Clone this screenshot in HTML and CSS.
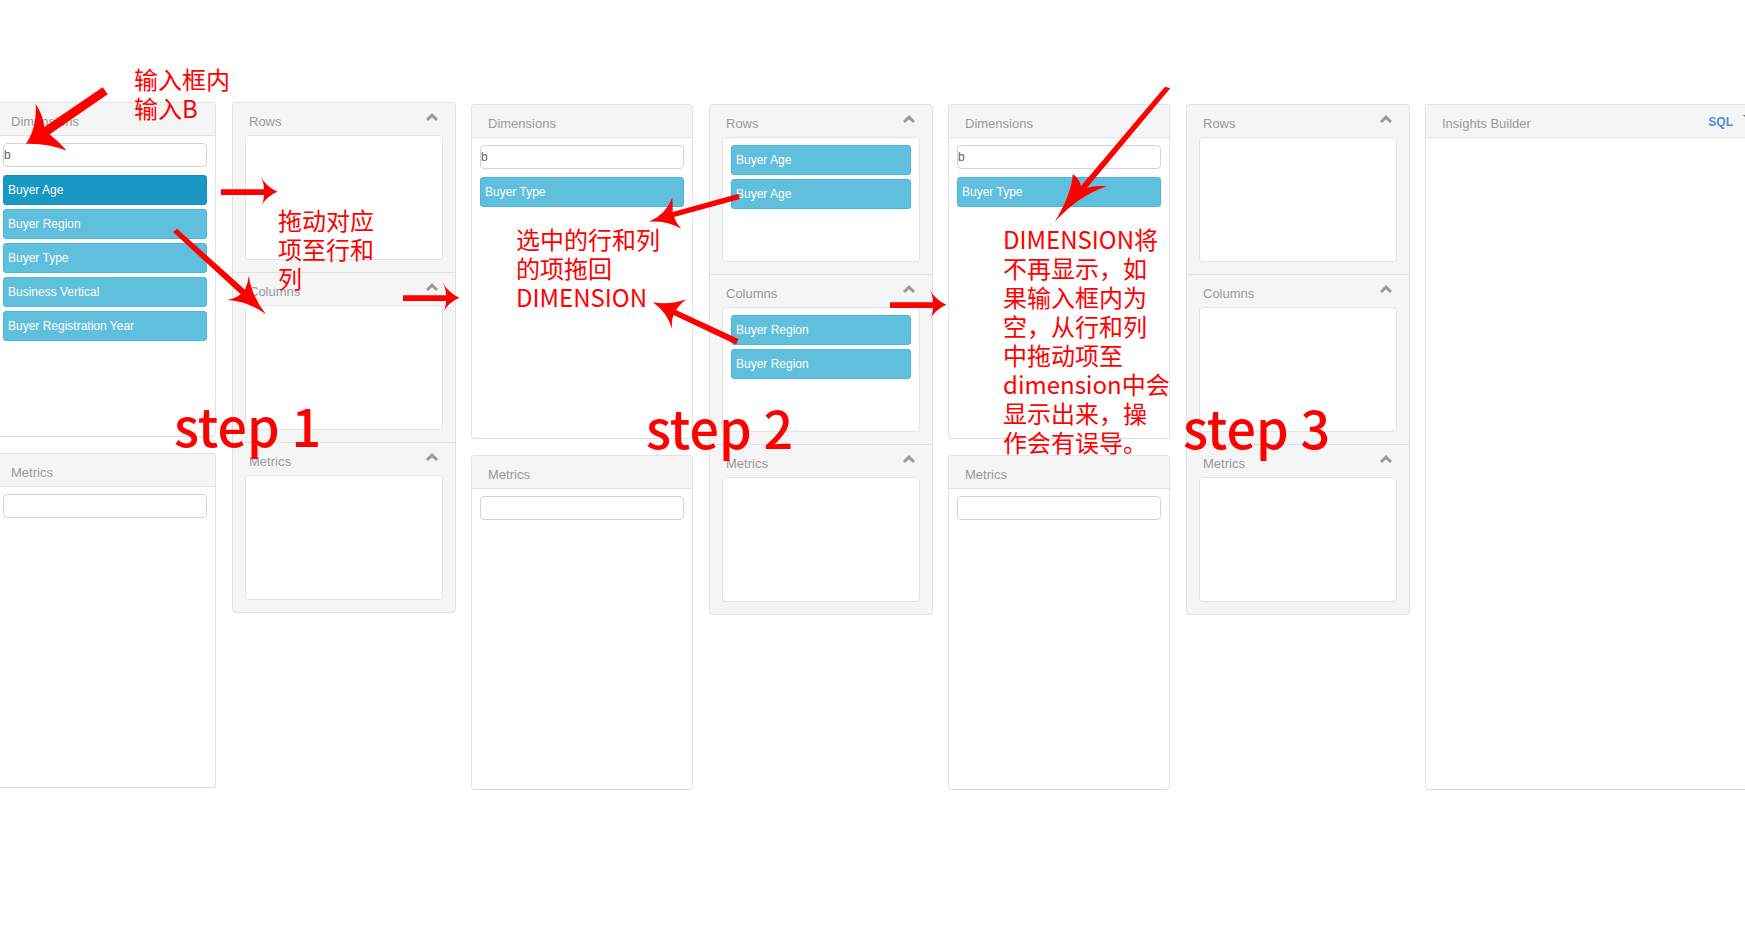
FILE: index.html
```html
<!DOCTYPE html>
<html lang="zh-CN">
<head>
<meta charset="utf-8">
<title>Insights Builder</title>
<link rel="stylesheet" href="styles.css">
</head>
<body>
<svg class="defs" aria-hidden="true">
  <symbol id="chevron" viewBox="0 0 12 8"><path d="M6 0 12 6 10 8 6 4.200 2 8 0 6z"/></symbol>
</svg>
<main class="board">
  <section class="step step-first">
    <div class="sources">
      <div class="panel">
        <h2 class="panel-head">Dimensions</h2>
        <div class="panel-body">
          <input class="search" type="text" value="b" aria-label="Filter dimensions">
          <ul class="items">
            <li class="item item-active">Buyer Age</li>
            <li class="item">Buyer Region</li>
            <li class="item">Buyer Type</li>
            <li class="item">Business Vertical</li>
            <li class="item">Buyer Registration Year</li>
          </ul>
        </div>
      </div>
      <div class="panel">
        <h2 class="panel-head">Metrics</h2>
        <div class="panel-body"><input class="search" type="text" aria-label="Filter metrics"></div>
      </div>
    </div>
    <div class="buckets">
      <div class="bucket">
        <div class="bucket-head"><h2 class="title">Rows</h2><button class="toggle" type="button" aria-label="Collapse rows"><svg class="chevron"><use href="#chevron"/></svg></button></div>
        <ul class="well"></ul>
      </div>
      <div class="bucket">
        <div class="bucket-head"><h2 class="title">Columns</h2><button class="toggle" type="button" aria-label="Collapse columns"><svg class="chevron"><use href="#chevron"/></svg></button></div>
        <ul class="well"></ul>
      </div>
      <div class="bucket">
        <div class="bucket-head"><h2 class="title">Metrics</h2><button class="toggle" type="button" aria-label="Collapse metrics"><svg class="chevron"><use href="#chevron"/></svg></button></div>
        <ul class="well"></ul>
      </div>
    </div>
  </section>

  <section class="step">
    <div class="sources">
      <div class="panel">
        <h2 class="panel-head">Dimensions</h2>
        <div class="panel-body">
          <input class="search" type="text" value="b" aria-label="Filter dimensions">
          <ul class="items"><li class="item">Buyer Type</li></ul>
        </div>
      </div>
      <div class="panel">
        <h2 class="panel-head">Metrics</h2>
        <div class="panel-body"><input class="search" type="text" aria-label="Filter metrics"></div>
      </div>
    </div>
    <div class="buckets">
      <div class="bucket">
        <div class="bucket-head"><h2 class="title">Rows</h2><button class="toggle" type="button" aria-label="Collapse rows"><svg class="chevron"><use href="#chevron"/></svg></button></div>
        <ul class="well"><li class="item">Buyer Age</li><li class="item">Buyer Age</li></ul>
      </div>
      <div class="bucket">
        <div class="bucket-head"><h2 class="title">Columns</h2><button class="toggle" type="button" aria-label="Collapse columns"><svg class="chevron"><use href="#chevron"/></svg></button></div>
        <ul class="well"><li class="item">Buyer Region</li><li class="item">Buyer Region</li></ul>
      </div>
      <div class="bucket">
        <div class="bucket-head"><h2 class="title">Metrics</h2><button class="toggle" type="button" aria-label="Collapse metrics"><svg class="chevron"><use href="#chevron"/></svg></button></div>
        <ul class="well"></ul>
      </div>
    </div>
  </section>

  <section class="step">
    <div class="sources">
      <div class="panel">
        <h2 class="panel-head">Dimensions</h2>
        <div class="panel-body">
          <input class="search" type="text" value="b" aria-label="Filter dimensions">
          <ul class="items"><li class="item">Buyer Type</li></ul>
        </div>
      </div>
      <div class="panel">
        <h2 class="panel-head">Metrics</h2>
        <div class="panel-body"><input class="search" type="text" aria-label="Filter metrics"></div>
      </div>
    </div>
    <div class="buckets">
      <div class="bucket">
        <div class="bucket-head"><h2 class="title">Rows</h2><button class="toggle" type="button" aria-label="Collapse rows"><svg class="chevron"><use href="#chevron"/></svg></button></div>
        <ul class="well"></ul>
      </div>
      <div class="bucket">
        <div class="bucket-head"><h2 class="title">Columns</h2><button class="toggle" type="button" aria-label="Collapse columns"><svg class="chevron"><use href="#chevron"/></svg></button></div>
        <ul class="well"></ul>
      </div>
      <div class="bucket">
        <div class="bucket-head"><h2 class="title">Metrics</h2><button class="toggle" type="button" aria-label="Collapse metrics"><svg class="chevron"><use href="#chevron"/></svg></button></div>
        <ul class="well"></ul>
      </div>
    </div>
  </section>

  <section class="step">
    <div class="panel builder">
      <div class="panel-head builder-head">
        <h2 class="title">Insights Builder</h2>
        <div class="actions">
          <button class="sql" type="button">SQL</button>
          <button class="toggle" type="button" aria-label="More"><svg class="caret" viewBox="0 0 12 6"><path d="M0 0h12L6 6z"/></svg></button>
        </div>
      </div>
    </div>
  </section>
</main>

<div class="notes">
  <svg class="arrows" aria-hidden="true">
    <defs>
      <path id="flow" d="M221 189.300H264Q264 182 260 175.300Q266 187 277.500 191.700Q266 196 260 208.300Q264 202 264 195H221z"/>
    </defs>
    <path d="M102.700 87.300 107.700 94.300 49.700 134.300Q58 141 66.700 150.700Q48 143 26 143.700Q37 128 35.700 104Q43 115 44.300 127z"/>
    <use href="#flow"/>
    <use href="#flow" x="182" y="106"/>
    <use href="#flow" x="669" y="113"/>
    <path d="M173 232 177 228.700 245 289.700Q248 283 248.700 276Q252 297 266 314.300Q248 301 226.700 300Q235 299 240.700 294.300z"/>
    <path d="M738.300 193.700 740 199 674 217Q676 223 681.300 229Q667 220 649.300 221.700Q666 214 672.300 197.700Q673 206 672.700 212z"/>
    <path d="M738.500 339 736 344.500 673.500 315Q671 322 672.300 329.300Q667 312 652.700 302.300Q670 305 686 299.300Q680 304 676 310z"/>
    <path d="M1165 86.700 1170.300 88.300 1087 187.700Q1096 185 1106.700 186.300Q1078 196 1054.700 222Q1072 193 1072.700 174Q1079 178 1081 186z"/>
  </svg>
  <p class="note note-input">输入框内<br>输入B</p>
  <p class="note note-drag">拖动对应<br>项至行和<br>列</p>
  <p class="note note-back">选中的行和列<br>的项拖回<br>DIMENSION</p>
  <p class="note note-result">DIMENSION将<br>不再显示，如<br>果输入框内为<br>空，从行和列<br>中拖动项至<br>dimension中会<br>显示出来，操<br>作会有误导。</p>
  <p class="caption caption-1">step 1</p>
  <p class="caption caption-2">step 2</p>
  <p class="caption caption-3">step 3</p>
</div>
</body>
</html>
```

FILE: styles.css
```css
* { box-sizing: border-box; }

body {
  margin: 0;
  position: relative;
  overflow-x: hidden;
  min-height: 100vh;
  background: #fff;
  color: #999;
  font: 13px/27px "Liberation Sans", Arial, sans-serif;
}

h2, p, ul { margin: 0; padding: 0; font-size: inherit; font-weight: normal; }
ul { list-style: none; }
button { margin: 0; padding: 0; border: 0; background: none; font: inherit; color: inherit; }
svg { display: block; }

.defs { position: absolute; width: 0; height: 0; }

/* The board bleeds past both window edges */
.board {
  display: grid;
  grid-template-columns: 462fr 462fr 462fr 344fr;
  gap: 15px;
  margin: 0 -24px 0 -6px;
}

.step { display: flex; align-items: flex-start; gap: 16px; padding-top: 104px; }
.step-first { padding-top: 102px; }

.sources, .buckets { flex: 1 1 0; min-width: 0; }
.sources { display: flex; flex-direction: column; gap: 16px; }

.panel {
  min-height: 335px;
  border: 1px solid #e3e3e3;
  border-bottom-color: #dcdcdc;
  border-radius: 4px;
  background: #fff;
  overflow: hidden;
}
.panel-head {
  padding: 5px 16px 0;
  border-bottom: 1px solid #e0e0e0;
  background: #f5f5f5;
}
.panel-body { padding: 7px 8px; }

.search {
  display: block;
  width: 100%;
  height: 24px;
  padding: 0;
  border: 1px solid #d4d4d4;
  border-radius: 4px;
  background: #fff;
  color: #666;
  font: 12px/22px "Liberation Sans", Arial, sans-serif;
}

.items { display: grid; gap: 4px; margin-top: 8px; }
.item {
  padding: 0 4px;
  border: 1px solid #46b8da;
  border-radius: 3px;
  background: #5fbfdc;
  color: #fff;
  font-size: 12px;
  line-height: 28px;
}
.item-active { border-color: #1590bb; background: #1998c3; }

.buckets {
  border: 1px solid #e0e0e0;
  border-radius: 4px;
  background: #f5f5f5;
}
.bucket { padding: 0 12px 12px; }
.bucket + .bucket { border-top: 1px solid #e0e0e0; }
.bucket-head {
  display: flex;
  justify-content: space-between;
  align-items: flex-start;
  padding: 5px 5px 0 4px;
}
.well {
  display: grid;
  align-content: start;
  gap: 4px;
  min-height: 125px;
  padding: 7px 8px;
  border: 1px solid #e3e3e3;
  border-radius: 4px;
  background: #fff;
}

.toggle { padding-top: 5px; }
.chevron { width: 12px; height: 8px; fill: #999; }

.builder { flex: 1; min-height: 686px; }
.builder-head { display: flex; justify-content: space-between; padding-right: 13px; }
.actions { display: flex; align-items: flex-start; gap: 10px; }
.sql { color: #4a90e2; font-size: 12px; font-weight: bold; line-height: 24px; }
.caret { width: 12px; height: 6px; fill: #777; }

/* Hand-placed marks over the board */
.notes { position: absolute; inset: 0; color: #f00; pointer-events: none; font-family: "Noto Sans CJK SC", sans-serif; }
.arrows { width: 100%; height: 100%; fill: #f00; }
.note, .caption { position: absolute; white-space: nowrap; }
.note { font-size: 24px; line-height: 29px; }
.note-input { left: 134px; top: 64px; }
.note-drag { left: 278px; top: 205px; }
.note-back { left: 516px; top: 224px; }
.note-result { left: 1003px; top: 224px; }
.caption { font-size: 52px; line-height: 64px; font-weight: 500; }
.caption-1 { left: 174px; top: 393px; }
.caption-2 { left: 646px; top: 395px; }
.caption-3 { left: 1183px; top: 395px; }
```
